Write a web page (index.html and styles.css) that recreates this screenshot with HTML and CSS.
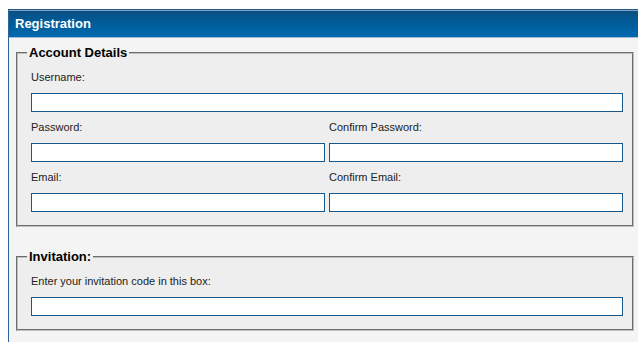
FILE: index.html
```html
<!DOCTYPE html>
<html lang="en">
<head>
    <meta charset="UTF-8">
    <meta name="viewport" content="width=device-width, initial-scale=1.0">
    <title>Registration</title>
    <link rel="stylesheet" href="styles.css">
</head>
<body>
    <div class="panel">
        <div class="panel-header">Registration</div>
        <div class="panel-body">
            <fieldset class="group">
                <legend>Account Details</legend>
                <div class="field">
                    <label for="username">Username:</label>
                    <input type="text" id="username">
                </div>
                <div class="field-row">
                    <div class="field">
                        <label for="password">Password:</label>
                        <input type="password" id="password">
                    </div>
                    <div class="field">
                        <label for="password2">Confirm Password:</label>
                        <input type="password" id="password2">
                    </div>
                </div>
                <div class="field-row">
                    <div class="field">
                        <label for="email">Email:</label>
                        <input type="text" id="email">
                    </div>
                    <div class="field">
                        <label for="email2">Confirm Email:</label>
                        <input type="text" id="email2">
                    </div>
                </div>
            </fieldset>

            <fieldset class="group">
                <legend>Invitation:</legend>
                <div class="field">
                    <label for="invite">Enter your invitation code in this box:</label>
                    <input type="text" id="invite">
                </div>
            </fieldset>
        </div>
    </div>
</body>
</html>
```

FILE: styles.css
```css
body {
    margin: 9px 0 0 8px;
    font-family: "Liberation Sans", Arial, sans-serif;
    background: #ffffff;
    overflow: hidden;
}

.panel {
    width: 631px;
    height: 400px;
    border: 1px solid #2d6397;
    border-top-color: #285a88;
    background: #f4f4f4;
}

.panel-header {
    height: 26px;
    line-height: 26px;
    padding-left: 6px;
    border-top: 1px solid #7fa3c6;
    border-bottom: 1px solid #a3bdd8;
    background: linear-gradient(to bottom, #0a4f84 0%, #005d9b 50%, #006aaf 100%);
    color: #ffffff;
    font-size: 13px;
    font-weight: bold;
}

.panel-body {
    padding-top: 7px;
}

.group {
    margin: 0 6px 22px 7px;
    padding: 10px 9px 13px 13px;
    border: 2px groove #c0c0c0;
    background: #eeeeee;
}

.group legend {
    margin-left: -4px;
    padding: 0 2px;
    font-size: 13px;
    font-weight: bold;
    line-height: 15px;
    color: #000000;
}

.field {
    display: flex;
    flex-direction: column;
}

.field-row {
    display: grid;
    grid-template-columns: 1fr 1fr;
    gap: 4px;
}

.field label {
    font-size: 11px;
    line-height: 14px;
    color: #222222;
    margin-bottom: 9px;
}

.field input {
    box-sizing: border-box;
    height: 19px;
    margin: 0 0 8px 0;
    padding: 0 3px;
    border: 1px solid #17598d;
    background: #ffffff;
    font-family: "Liberation Sans", Arial, sans-serif;
    font-size: 11px;
    outline: none;
}

.group > .field:last-child input,
.group > .field-row:last-child input {
    margin-bottom: 0;
}
```
